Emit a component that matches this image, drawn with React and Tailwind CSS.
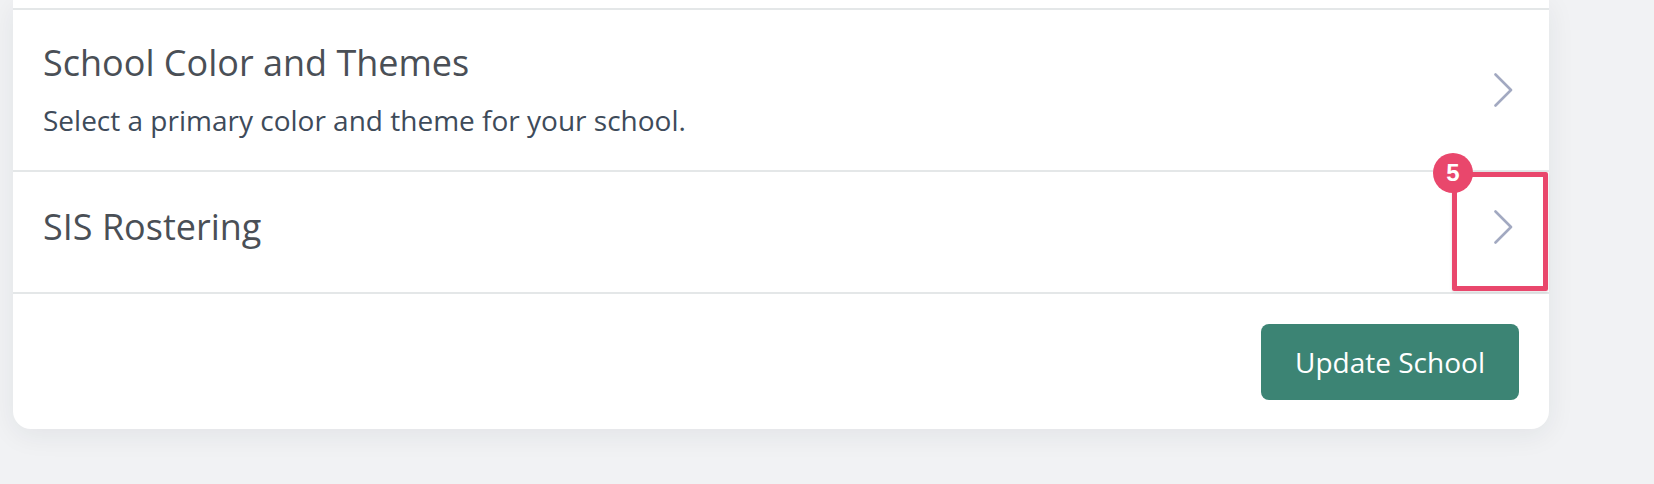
import React from 'react';

function Chevron() {
  return (
    <svg width="19" height="34" viewBox="0 0 19 34" fill="none" className="shrink-0">
      <polyline points="1.5,1.5 17,17 1.5,32.5" stroke="#a2a9c1" strokeWidth="2.6" strokeLinecap="round" strokeLinejoin="round" />
    </svg>
  );
}

function SettingRow({ title, description, className }) {
  return (
    <div className={`flex items-center justify-between border-t-2 border-[#e4e7e8] pl-[30px] pr-[36px] ${className}`}>
      <div>
        <h3 className="text-[36px] leading-[44px] text-[#4a4f56]">{title}</h3>
        {description && (
          <p className="mt-[17px] text-[28px] leading-[36px] text-[#3e4b5a]">{description}</p>
        )}
      </div>
      <Chevron />
    </div>
  );
}

export default function App() {
  return (
    <div className="min-h-[484px] bg-[#f1f2f4] pl-[13px] pr-[105px] pb-[55px]" style={{ fontFamily: '"Open Sans", "Noto Sans", sans-serif' }}>
      <div className="relative w-[1536px] bg-white rounded-b-[18px] shadow-[0_6px_28px_rgba(30,40,60,0.07)] pt-[8px]">
        <SettingRow
          title="School Color and Themes"
          description="Select a primary color and theme for your school."
          className="pt-[31px] pb-[32px]"
        />
        <SettingRow title="SIS Rostering" className="pt-[33px] pb-[43px]" />

        <div className="flex justify-end border-t-2 border-[#e4e7e8] pt-[30px] pb-[29px] pr-[30px]">
          <button className="h-[76px] w-[258px] rounded-[8px] bg-[#3c8474] text-[28px] text-white">
            Update School
          </button>
        </div>

        {/* annotation overlay */}
        <div className="absolute left-[1439px] top-[172px] h-[119px] w-[96px] rounded-[2px] border-[5px] border-[#e9476c] shadow-[0_1px_3px_rgba(0,0,0,0.12)]" />
        <div className="absolute left-[1420px] top-[153px] flex h-[40px] w-[40px] items-center justify-center rounded-full bg-[#e9476c] text-[24px] font-bold leading-none text-white" style={{ fontFamily: '"Liberation Sans", Arial, sans-serif' }}>
          5
        </div>
      </div>
    </div>
  );
}
